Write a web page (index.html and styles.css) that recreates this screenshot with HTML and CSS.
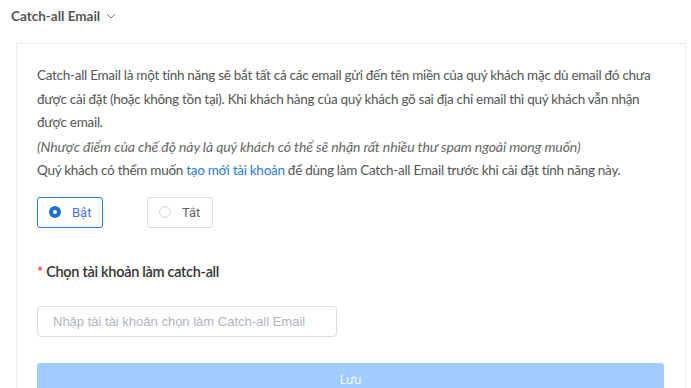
FILE: index.html
```html
<!DOCTYPE html>
<html lang="vi">
<head>
  <meta charset="UTF-8">
  <title>Catch-all Email</title>
  <link rel="stylesheet" href="styles.css">
</head>
<body>
  <div class="header">
    <span class="title">Catch-all Email</span>
    <svg class="chevron" width="10" height="6" viewBox="0 0 10 6">
      <path d="M1 1 L5 5 L9 1" fill="none" stroke="#777" stroke-width="1"/>
    </svg>
  </div>

  <div class="card">
    <p class="desc">
      Catch-all Email là một tính năng sẽ bắt tất cả các email gửi đến tên miền của quý khách mặc dù email đó chưa được cài đặt (hoặc không tồn tại). Khi khách hàng của quý khách gõ sai địa chỉ email thì quý khách vẫn nhận được email.<br>
      <em>(Nhược điểm của chế độ này là quý khách có thể sẽ nhận rất nhiều thư spam ngoài mong muốn)</em><br>
      Quý khách có thểm muốn <a href="#">tạo mới tài khoản</a> để dùng làm Catch-all Email trước khi cài đặt tính năng này.
    </p>

    <div class="options">
      <label class="option active"><span class="dot"></span>Bật</label>
      <label class="option"><span class="dot"></span>Tắt</label>
    </div>

    <div class="field-label"><span class="req">*</span> Chọn tài khoản làm catch-all</div>

    <input class="account" type="text" placeholder="Nhập tài tài khoản chọn làm Catch-all Email">

    <button class="save">Lưu</button>
  </div>
</body>
</html>
```

FILE: styles.css
```css
body {
  margin: 0;
  font-family: Lato, "Open Sans", sans-serif;
  color: #555;
  background: #fff;
  overflow: hidden;
}

.header {
  display: flex;
  align-items: center;
  height: 31px;
  padding: 0 11px;
}

.title {
  font-size: 13.5px;
  font-weight: 700;
  color: #555;
}

.chevron {
  margin-left: 6px;
  margin-top: 1px;
}

.card {
  margin: 12px 0 0 16px;
  width: 627px;
  padding: 20px 21px 20px 20px;
  border: 1px solid #ececec;
}

.desc {
  margin: 0;
  font-size: 13.5px;
  letter-spacing: -0.28px;
  line-height: 23.5px;
  color: #555;
}

.desc em {
  font-size: 14px;
  letter-spacing: -0.1px;
  color: #666;
}

.desc a {
  color: #2f7bd4;
  text-decoration: none;
}

.options {
  display: flex;
  gap: 44px;
  margin-top: 14px;
}

.option {
  display: flex;
  align-items: center;
  box-sizing: border-box;
  height: 31px;
  width: 66px;
  padding-left: 11px;
  border: 1px solid #d9dce3;
  border-radius: 3px;
  font-family: Roboto, "Liberation Sans", sans-serif;
  font-size: 13px;
  color: #666;
}

.option.active {
  border-color: #2a78cf;
  color: #4a6fd8;
}

.dot {
  box-sizing: border-box;
  width: 12px;
  height: 12px;
  margin-right: 11px;
  border: 1px solid #d4d7de;
  border-radius: 50%;
  background: #fff;
}

.option.active .dot {
  border: 4px solid #1e6fd0;
}

.field-label {
  margin-top: 33px;
  font-size: 14.5px;
  font-weight: 600;
  letter-spacing: -0.3px;
  line-height: 22px;
  color: #333;
}

.req {
  color: #e53935;
}

.account {
  display: block;
  box-sizing: border-box;
  width: 300px;
  height: 31px;
  margin-top: 23px;
  padding: 0 15px;
  border: 1px solid #d9dce3;
  border-radius: 4px;
  font-family: "Liberation Sans", Arial, sans-serif;
  font-size: 13px;
  outline: none;
}

.account::placeholder {
  color: #b0b4bf;
}

.save {
  display: block;
  width: 100%;
  height: 32px;
  margin-top: 26px;
  border: none;
  border-radius: 3px;
  background: #a0cdfd;
  color: #fff;
  font-family: "Open Sans", sans-serif;
  font-size: 12px;
  padding-top: 2px;
}
```
